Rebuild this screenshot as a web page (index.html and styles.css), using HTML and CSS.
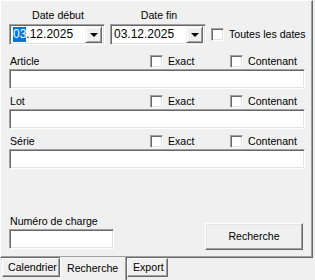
FILE: index.html
```html
<!DOCTYPE html>
<html>
<head>
<meta charset="utf-8">
<link rel="stylesheet" href="styles.css">
</head>
<body>
<div class="panel">
  <div class="daterow">
    <div class="datecol">
      <div class="dlabel">Date début</div>
      <div class="combo"><span class="ctext"><span class="sel">03</span>.12.2025</span><span class="dropbtn"><span class="arrow"></span></span></div>
    </div>
    <div class="datecol">
      <div class="dlabel">Date fin</div>
      <div class="combo"><span class="ctext">03.12.2025</span><span class="dropbtn"><span class="arrow"></span></span></div>
    </div>
    <label class="chk all"><span class="box"></span><span class="ctxt">Toutes les dates</span></label>
  </div>

  <div class="group first">
    <div class="ghead"><span class="glabel">Article</span><label class="chk"><span class="box"></span><span class="ctxt">Exact</span></label><label class="chk"><span class="box"></span><span class="ctxt">Contenant</span></label></div>
    <div class="tbox wide"></div>
  </div>
  <div class="group">
    <div class="ghead"><span class="glabel">Lot</span><label class="chk"><span class="box"></span><span class="ctxt">Exact</span></label><label class="chk"><span class="box"></span><span class="ctxt">Contenant</span></label></div>
    <div class="tbox wide"></div>
  </div>
  <div class="group">
    <div class="ghead"><span class="glabel">Série</span><label class="chk"><span class="box"></span><span class="ctxt">Exact</span></label><label class="chk"><span class="box"></span><span class="ctxt">Contenant</span></label></div>
    <div class="tbox wide"></div>
  </div>

  <div class="bottom">
    <div class="chargecol">
      <div class="clabel">Numéro de charge</div>
      <div class="tbox short"></div>
    </div>
    <div class="btn">Recherche</div>
  </div>
</div>
<div class="tabs">
  <div class="tab t1">Calendrier</div>
  <div class="tab t2 active">Recherche</div>
  <div class="tab t3">Export</div>
</div>
</body>
</html>
```
FILE: styles.css
```css
html, body {
  margin: 0;
  padding: 0;
}
body {
  width: 315px;
  height: 280px;
  background: #f0f0f0;
  font-family: "Liberation Sans", Arial, sans-serif;
  font-size: 10.6px;
  line-height: 13px;
  color: #000;
  overflow: hidden;
}
.panel {
  box-sizing: border-box;
  width: 313px;
  height: 258px;
  border: 1px solid;
  border-color: #ffffff #696969 #696969 #ffffff;
  box-shadow: inset -1px -1px #a0a0a0;
  padding: 8px 0 0 8px;
  display: flex;
  flex-direction: column;
}
.daterow {
  display: flex;
  align-items: flex-end;
  height: 36px;
}
.datecol {
  width: 96px;
  margin-right: 5px;
  display: flex;
  flex-direction: column;
}
.dlabel {
  text-align: center;
  height: 13px;
  margin-bottom: 2px;
  padding-left: 2px;
}
.combo {
  box-sizing: border-box;
  height: 21px;
  width: 96px;
  background: #fff;
  border: 1px solid;
  border-color: #a0a0a0 #fff #fff #a0a0a0;
  box-shadow: inset 1px 1px #696969, inset -1px -1px #e3e3e3;
  display: flex;
  align-items: center;
  padding: 2px;
  font-size: 12px;
}
.ctext {
  flex: 1;
  padding-left: 1px;
  line-height: 15px;
}
.sel {
  background: #0078d7;
  color: #fff;
  display: inline-block;
}
.dropbtn {
  box-sizing: border-box;
  width: 17px;
  height: 17px;
  background: #f0f0f0;
  border: 1px solid;
  border-color: #f0f0f0 #696969 #696969 #f0f0f0;
  box-shadow: inset 1px 1px #fff, inset -1px -1px #a0a0a0;
  display: flex;
  align-items: center;
  justify-content: center;
}
.arrow {
  width: 0;
  height: 0;
  border-left: 4px solid transparent;
  border-right: 4px solid transparent;
  border-top: 4px solid #000;
  margin-top: 1px;
}
.chk {
  display: flex;
  align-items: center;
  height: 13px;
}
.box {
  box-sizing: border-box;
  width: 13px;
  height: 13px;
  background: #fff;
  border: 1px solid;
  border-color: #a0a0a0 #fff #fff #a0a0a0;
  box-shadow: inset 1px 1px #696969, inset -1px -1px #e3e3e3;
  margin-right: 5px;
  flex: none;
}
.all {
  height: 21px;
}
.group {
  display: flex;
  flex-direction: column;
  margin-top: 6px;
}
.group.first {
  margin-top: 10px;
}
.ghead {
  display: grid;
  grid-template-columns: 141px 80px auto;
  height: 13px;
  margin-bottom: 1px;
  padding-left: 1px;
  align-items: center;
}
.ghead .chk:nth-child(2),
.ghead .chk:nth-child(3) {
  margin-left: -1px;
}
.tbox {
  box-sizing: border-box;
  height: 20px;
  background: #fff;
  border: 1px solid;
  border-color: #a0a0a0 #fff #fff #a0a0a0;
  box-shadow: inset 1px 1px #696969, inset -1px -1px #e3e3e3;
}
.tbox.wide {
  width: 296px;
}
.tbox.short {
  width: 105px;
}
.bottom {
  display: flex;
  align-items: flex-end;
  margin-top: 46px;
}
.chargecol {
  display: flex;
  flex-direction: column;
  width: 196px;
}
.clabel {
  height: 13px;
  margin-bottom: 1px;
  padding-left: 1px;
}
.btn {
  box-sizing: border-box;
  width: 98px;
  height: 27px;
  border: 1px solid;
  border-color: #fff #696969 #696969 #fff;
  box-shadow: inset -1px -1px #a0a0a0, inset 1px 1px #e3e3e3;
  background: #f0f0f0;
  display: flex;
  align-items: center;
  justify-content: center;
  margin-bottom: -1px;
}
.tabs {
  display: flex;
  align-items: flex-start;
  padding-left: 2px;
  margin-top: -1px;
}
.tab {
  box-sizing: border-box;
  height: 19px;
  border: 1px solid;
  border-color: #fff #696969 #696969 #fff;
  box-shadow: inset -1px -1px #a0a0a0;
  background: #f0f0f0;
  padding: 2px 0 0 5px;
}
.t1 {
  width: 58px;
  margin-top: 1px;
}
.t2 {
  width: 67px;
  height: 24px;
  border-top: none;
  border-bottom: none;
  padding: 5px 0 0 6px;
}
.t3 {
  width: 41px;
  margin-top: 1px;
}
```
